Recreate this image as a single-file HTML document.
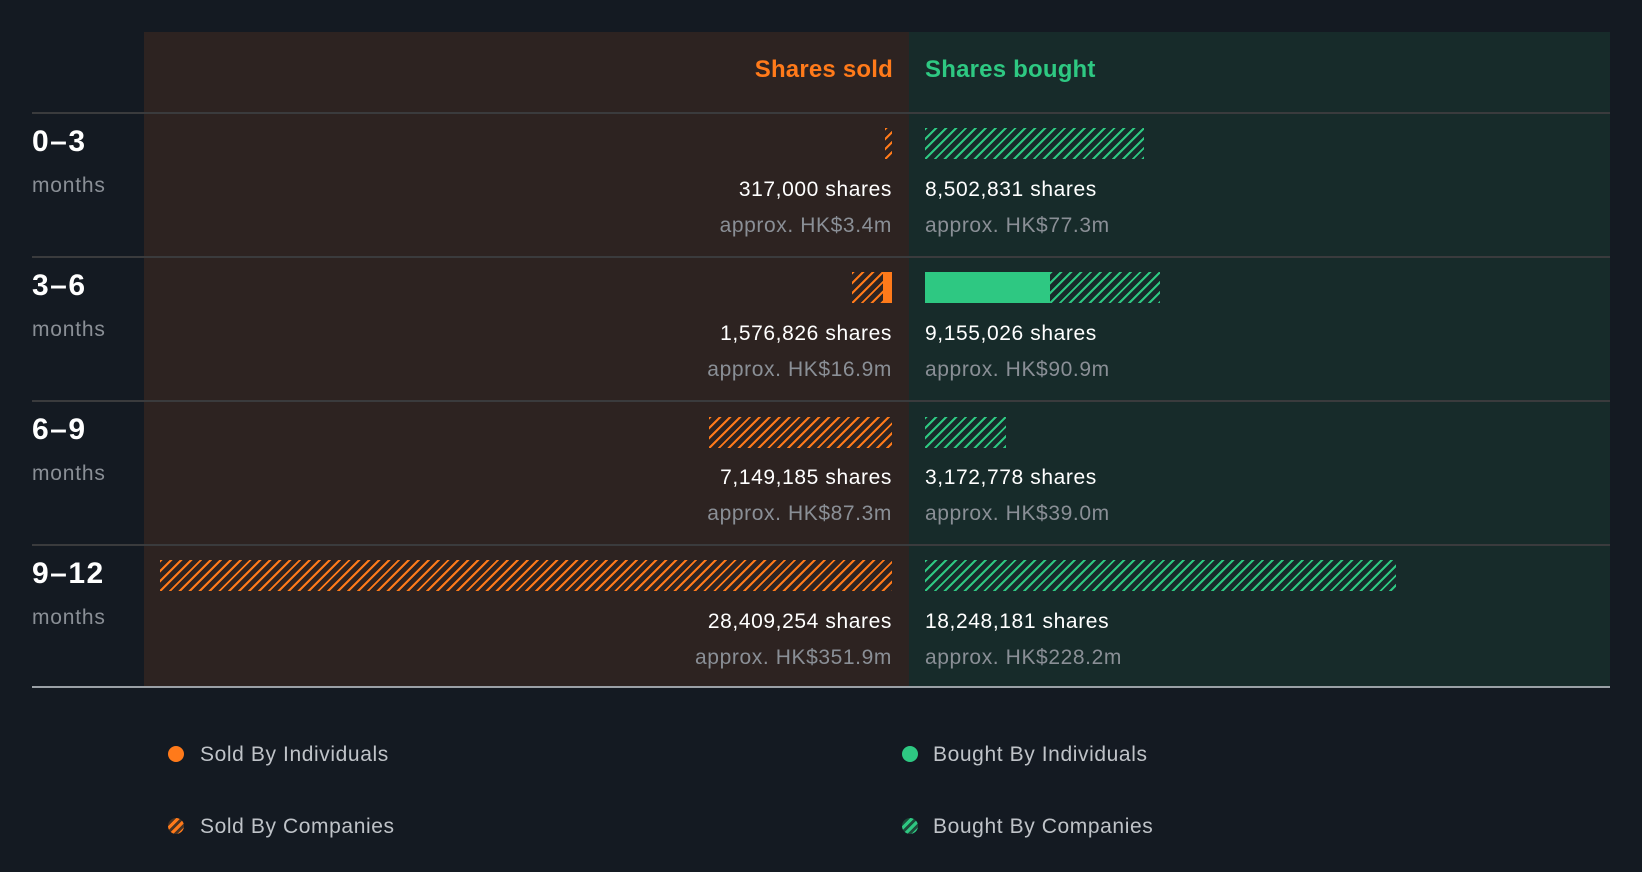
<!DOCTYPE html>
<html><head><meta charset="utf-8"><style>
*{margin:0;padding:0;box-sizing:border-box}
body{width:1642px;height:872px;background:#141a22;font-family:"Liberation Sans",Arial,sans-serif;position:relative;overflow:hidden}
.a{position:absolute}
.pl{left:144px;top:32px;width:765px;height:655px;background:#2d2321}
.pr{left:909px;top:32px;width:701px;height:655px;background:#172b2a}
.hl{left:32px;width:1578px;height:2px;background:#3a3b3d}
.h{font-size:24px;font-weight:bold;top:56px;letter-spacing:0.2px}
.lab{left:32px;color:#fff;font-size:30px;font-weight:bold;letter-spacing:1.5px}
.mo{left:32px;color:#8a8f96;font-size:21px;letter-spacing:0.8px}
.sv{color:#fff;font-size:21px;white-space:nowrap;letter-spacing:0.6px}
.ap{color:#8a8f96;font-size:21px;white-space:nowrap;letter-spacing:0.6px}
.r{right:750px;text-align:right}
.g{left:925px}
.ho{background:repeating-linear-gradient(135deg,#ff7a1a 0 2px,transparent 2px 7px)}
.hg{background:repeating-linear-gradient(135deg,#2ec882 0 2px,transparent 2px 7px)}
.bar{height:31px}
.leg{font-size:21px;color:#bfc3c8;letter-spacing:0.6px}
.dot{width:16px;height:16px;border-radius:50%}
</style></head><body>
<div class="a pl"></div><div class="a pr"></div>
<div class="a h" style="right:749px;color:#ff7a1a">Shares sold</div>
<div class="a h" style="left:925px;color:#2ec882">Shares bought</div>
<div class="a hl" style="top:112px"></div>
<div class="a hl" style="top:256px"></div>
<div class="a hl" style="top:400px"></div>
<div class="a hl" style="top:544px"></div>
<div class="a" style="left:32px;top:686px;width:1578px;height:2px;background:#9aa0a6"></div>

<div class="a lab" style="top:125px">0–3</div><div class="a mo" style="top:174px">months</div>
<div class="a lab" style="top:269px">3–6</div><div class="a mo" style="top:318px">months</div>
<div class="a lab" style="top:413px">6–9</div><div class="a mo" style="top:462px">months</div>
<div class="a lab" style="top:557px">9–12</div><div class="a mo" style="top:606px">months</div>

<div class="a bar ho" style="left:885px;top:128px;width:7px"></div>
<div class="a bar hg" style="left:925px;top:128px;width:219px"></div>
<div class="a sv r" style="top:178px">317,000 shares</div>
<div class="a ap r" style="top:214px">approx. HK$3.4m</div>
<div class="a sv g" style="top:178px">8,502,831 shares</div>
<div class="a ap g" style="top:214px">approx. HK$77.3m</div>

<div class="a bar ho" style="left:852px;top:272px;width:31px"></div>
<div class="a bar" style="left:883px;top:272px;width:9px;background:#ff7a1a"></div>
<div class="a bar" style="left:925px;top:272px;width:125px;background:#2ec882"></div>
<div class="a bar hg" style="left:1050px;top:272px;width:110px"></div>
<div class="a sv r" style="top:322px">1,576,826 shares</div>
<div class="a ap r" style="top:358px">approx. HK$16.9m</div>
<div class="a sv g" style="top:322px">9,155,026 shares</div>
<div class="a ap g" style="top:358px">approx. HK$90.9m</div>

<div class="a bar ho" style="left:709px;top:417px;width:183px"></div>
<div class="a bar hg" style="left:925px;top:417px;width:81px"></div>
<div class="a sv r" style="top:466px">7,149,185 shares</div>
<div class="a ap r" style="top:502px">approx. HK$87.3m</div>
<div class="a sv g" style="top:466px">3,172,778 shares</div>
<div class="a ap g" style="top:502px">approx. HK$39.0m</div>

<div class="a bar ho" style="left:160px;top:560px;width:732px"></div>
<div class="a bar hg" style="left:925px;top:560px;width:471px"></div>
<div class="a sv r" style="top:610px">28,409,254 shares</div>
<div class="a ap r" style="top:646px">approx. HK$351.9m</div>
<div class="a sv g" style="top:610px">18,248,181 shares</div>
<div class="a ap g" style="top:646px">approx. HK$228.2m</div>

<div class="a dot" style="left:168px;top:746px;background:#ff7a1a"></div>
<div class="a leg" style="left:200px;top:743px">Sold By Individuals</div>
<div class="a dot" style="left:168px;top:818px;background:repeating-linear-gradient(135deg,#ff7a1a 0 3px,#4a3322 3px 6px)"></div>
<div class="a leg" style="left:200px;top:815px">Sold By Companies</div>
<div class="a dot" style="left:902px;top:746px;background:#2ec882"></div>
<div class="a leg" style="left:933px;top:743px">Bought By Individuals</div>
<div class="a dot" style="left:902px;top:818px;background:repeating-linear-gradient(135deg,#2ec882 0 3px,#1d4a3a 3px 6px)"></div>
<div class="a leg" style="left:933px;top:815px">Bought By Companies</div>
</body></html>
